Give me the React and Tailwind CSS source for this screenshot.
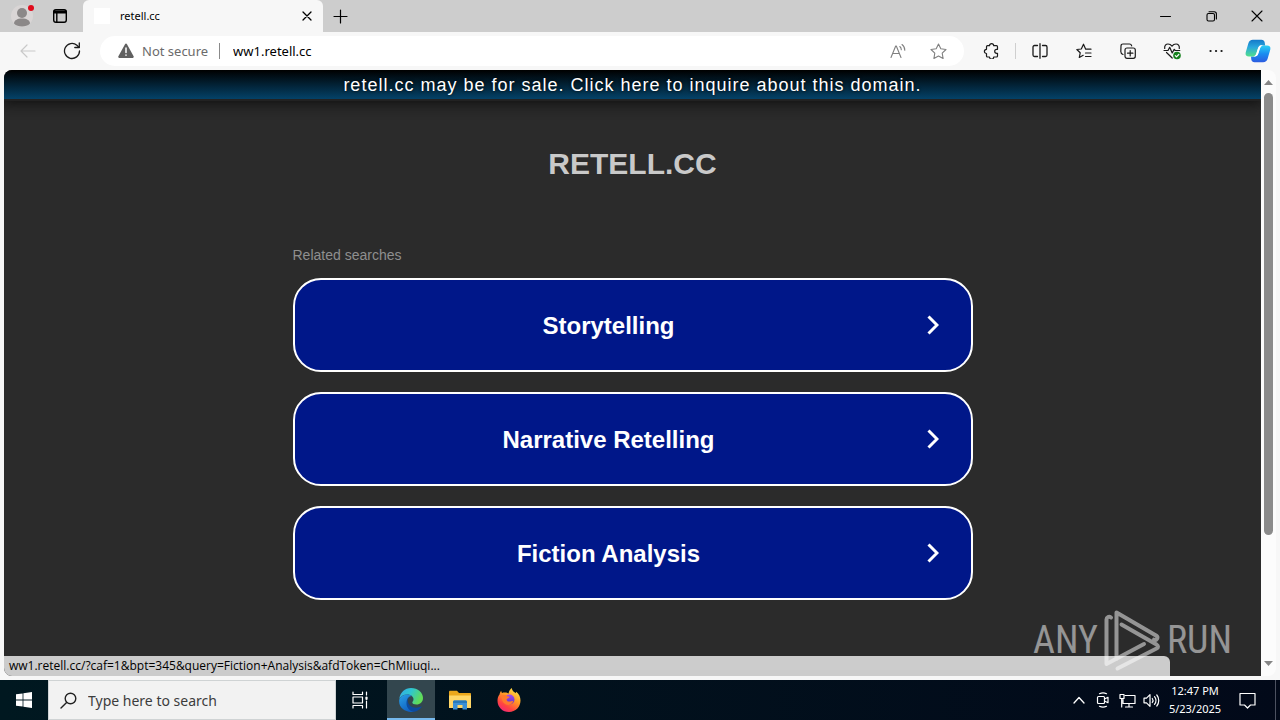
import React from "react";

const SANS = "font-['Noto_Sans','Open_Sans',sans-serif]";
const ARIAL = "font-['Liberation_Sans',Arial,sans-serif]";

function Icon({ size = 16, children, className = "", sw = 1 }) {
  return (
    <svg
      width={size}
      height={size}
      viewBox={`0 0 ${size} ${size}`}
      fill="none"
      stroke="currentColor"
      strokeWidth={sw}
      strokeLinecap="round"
      strokeLinejoin="round"
      aria-hidden="true"
      className={`shrink-0 ${className}`}
    >
      {children}
    </svg>
  );
}

function TabStrip() {
  return (
    <div className="flex h-8 shrink-0 items-stretch bg-[#cdcdcd] text-black">
      <button aria-label="Profile" className="flex w-11 items-center justify-center">
        <Icon size={24}>
          <circle cx="12" cy="12" r="11" fill="#d9d5d5" stroke="none" />
          <circle cx="12" cy="9" r="5" fill="#8b8888" stroke="none" />
          <path d="M4 19.5c0-3 3-5 8-5s8 2 8 5c-2 2.200-5 3-8 3s-6-.8-8-3z" fill="#8b8888" stroke="none" />
          <circle cx="21" cy="4" r="3" fill="#e00b1c" stroke="none" />
        </Icon>
      </button>
      <button aria-label="Tab actions" className="flex w-8 items-center justify-center">
        <Icon sw={1.4}>
          <rect x="1.700" y="1.700" width="12.600" height="12.600" rx="2.200" />
          <path d="M2 3.500h12M2 4.500h12" strokeWidth="2" />
          <path d="M4.800 5v9" />
        </Icon>
      </button>
      <div className="ml-[7px] flex w-60 items-center rounded-t-md bg-[#f7f7f7] pl-[11px] pr-2">
        <span className="size-4 bg-white" />
        <span className={`ml-[10px] flex-1 text-[11px] leading-4 ${SANS}`}>retell.cc</span>
        <button aria-label="Close tab" className="flex size-4 items-center justify-center">
          <Icon size={10} sw={1.3}>
            <path d="M1 1l8 8M9 1l-8 8" />
          </Icon>
        </button>
      </div>
      <button aria-label="New tab" className="flex w-[34px] items-center justify-center">
        <Icon size={15} sw={1.2}>
          <path d="M7.500 1v13M1 7.500h13" />
        </Icon>
      </button>
      <div className="ml-auto flex">
        <button aria-label="Minimize" className="flex w-[46px] items-center justify-center">
          <Icon size={11}>
            <path d="M.5 5.500h10" />
          </Icon>
        </button>
        <button aria-label="Restore" className="flex w-[46px] items-center justify-center">
          <Icon size={11} sw={1.1}>
            <rect x="1" y="2.500" width="7.500" height="7.500" rx="1.500" />
            <path d="M3 .7h5.200a2.200 2.200 0 0 1 2.200 2.200V8" />
          </Icon>
        </button>
        <button aria-label="Close" className="flex w-[46px] items-center justify-center">
          <Icon size={12} sw={1.1}>
            <path d="M1 1l10 10M11 1L1 11" />
          </Icon>
        </button>
      </div>
    </div>
  );
}

function ToolButton({ label, children, className = "w-11" }) {
  return (
    <button aria-label={label} className={`flex h-8 shrink-0 items-center justify-center ${className}`}>
      {children}
    </button>
  );
}

function Copilot() {
  return (
    <svg width="26" height="24" viewBox="0 0 26 24" aria-hidden="true">
      <defs>
        <linearGradient id="cpA" x1="0" y1="0" x2="0" y2="1">
          <stop offset="0" stopColor="#1479c9" />
          <stop offset=".45" stopColor="#29a7dd" />
          <stop offset="1" stopColor="#52e08a" />
        </linearGradient>
        <linearGradient id="cpB" x1="0" y1="0" x2="0" y2="1">
          <stop offset="0" stopColor="#2bd0f5" />
          <stop offset=".5" stopColor="#1a8cf0" />
          <stop offset="1" stopColor="#2c5be0" />
        </linearGradient>
      </defs>
      <path d="M18.500 6.500h3.500c2.500 0 4 1.500 3.300 4l-2.600 9c-.8 2.600-2.200 3.800-4.600 3.800H9.500c-1.800 0-2.800-1-3.200-2.800L6 17.500h3.500c2 0 3-1 3.600-3l1.600-5c.7-2 1.800-3 3.800-3z" fill="url(#cpB)" />
      <path d="M7.500 17.500H4c-2.500 0-4-1.500-3.300-4l2.600-9C4.100 1.900 5.500.7 7.900.7h8.600c1.800 0 2.800 1 3.200 2.800l.5 3h-3.700c-2 0-3 1-3.600 3l-1.600 5c-.7 2-1.800 3-3.800 3z" fill="url(#cpA)" />
      <path d="M14 7.500c.7-1 1.300-1.200 2.400-1.200h2.300c-2 .2-3 1.200-3.700 3.200l-1.600 5c-.6 2-1.700 3-3.700 3H8.500c1.600-.4 2.300-1.300 2.900-3l1.600-5z" fill="#fff" />
    </svg>
  );
}

function Toolbar() {
  return (
    <div className="flex h-[38px] shrink-0 items-center bg-[#f7f7f7] pl-[6px] pr-[2px] text-[#1b1b1b]">
      <ToolButton label="Back">
        <Icon className="text-[#c9c9c9]" sw={1.2}>
          <path d="M15 8H1M7 2L1 8l6 6" />
        </Icon>
      </ToolButton>
      <ToolButton label="Refresh">
        <Icon size={18} sw={1.3}>
          <path d="M16.500 9a7.500 7.500 0 1 1-2.600-5.700l2 1.900" />
          <path d="M16.300 1v4.500h-4.500" />
        </Icon>
      </ToolButton>
      <div className="ml-[6px] flex h-[30px] min-w-0 flex-1 items-center rounded-full bg-white pl-[18px] pr-[6px]">
        <button className={`flex shrink-0 items-center gap-2 text-[13px] leading-4 text-[#6b6b6b] ${SANS}`}>
          <Icon>
            <path d="M7 1.200c.5-.8 1.500-.8 2 0l6.600 12c.5.900-.1 1.900-1.100 1.900h-13c-1 0-1.600-1-1.100-1.900z" fill="#606060" stroke="none" />
            <path d="M8 5v4.500M8 12v.2" stroke="#fff" strokeWidth="1.500" />
          </Icon>
          Not secure
        </button>
        <span className="ml-[11px] h-4 w-px shrink-0 bg-[#8a8a8a]" />
        <input
          aria-label="Address"
          defaultValue="ww1.retell.cc"
          className={`ml-[13px] min-w-0 flex-1 bg-transparent text-[13px] leading-4 text-black outline-none ${SANS}`}
        />
        <ToolButton label="Read aloud" className="w-10">
          <Icon size={17} className="text-[#808080]" sw={1.100}>
            <path d="M1 14.500L5.700 3h.6L11 14.500M2.700 10.500h6.600" />
            <path d="M9.800 3.500c1 .8 1.500 1.900 1.500 3.200M12 1.500c1.800 1.300 2.800 3.200 2.800 5.700" />
          </Icon>
        </ToolButton>
        <ToolButton label="Add to favorites" className="w-10">
          <Icon size={17} className="text-[#808080]" sw={1.100}>
            <path d="M8.500 1l2.300 4.800 5.200.7-3.800 3.700.9 5.300-4.600-2.500-4.600 2.500.9-5.300L1 6.500l5.200-.7z" />
          </Icon>
        </ToolButton>
      </div>
      <ToolButton label="Extensions" className="ml-[5px] w-11">
        <Icon sw={1.200}>
          <path d="M4.500 2.700h2a2.100 2.100 0 0 1 4.200 0h2.800c.6 0 1 .4 1 1v2.600h-.8a2 2 0 0 0 0 4h.8V13c0 .6-.4 1-1 1h-2.800a2.100 2.100 0 0 1-4.200 0h-2c-.6 0-1-.4-1-1v-2.500a2.100 2.100 0 0 1 0-4.200V3.700c0-.6.4-1 1-1z" />
        </Icon>
      </ToolButton>
      <span className="mx-[2px] h-4 w-px shrink-0 bg-[#cfcfcf]" />
      <ToolButton label="Split screen">
        <Icon sw={1.300}>
          <path d="M5.500 2.500h-3c-.8 0-1.500.7-1.500 1.500v8c0 .8.700 1.500 1.500 1.500h3M10.500 2.500h3c.8 0 1.500.7 1.500 1.500v8c0 .8-.7 1.500-1.500 1.500h-3M8 .7v14.600" />
        </Icon>
      </ToolButton>
      <ToolButton label="Favorites">
        <Icon sw={1.200}>
          <path d="M15 6.200H9.700L7.500 1.200 5.300 6 .8 6.500l3.400 3.300-.9 4.700 3.900-2.200M9.500 10H15M9.500 13.500H15" />
        </Icon>
      </ToolButton>
      <ToolButton label="Collections">
        <Icon sw={1.200}>
          <rect x="5" y="5" width="10.300" height="10.300" rx="2" />
          <path d="M10.200 7.500v5.400M7.500 10.200h5.400M3 11.500C1.500 11 .8 10 .8 8.600L1 3C1 1.700 1.800 1 3 1h6.500c1.100 0 1.900.7 2.200 1.800" />
        </Icon>
      </ToolButton>
      <ToolButton label="Browser essentials">
        <Icon size={18} sw={1.200}>
          <path d="M1.700 6.500C1.300 3.800 3 2 5 2c1.700 0 3 .8 4 2.200C10 2.800 11.300 2 13 2c2 0 3.700 1.800 3.300 4.500M3.500 10.500l5.700 5.500" />
          <path d="M1 8.500h4l1.700-3.200L9.200 11l2-3.700 1 1.200h4.600" />
          <circle cx="14" cy="13.500" r="3.800" fill="#16811d" stroke="none" />
          <path d="M12.300 13.600l1.200 1.200 2.300-2.300" stroke="#fff" />
        </Icon>
      </ToolButton>
      <ToolButton label="Settings and more">
        <Icon>
          <path d="M2.500 8h.1M8 8h.1M13.500 8h.1" strokeWidth="2.200" />
        </Icon>
      </ToolButton>
      <ToolButton label="Copilot" className="w-10">
        <Copilot />
      </ToolButton>
    </div>
  );
}

function SearchCard({ children }) {
  return (
    <a
      href="#"
      className="flex h-[94px] items-center gap-1 rounded-[28px] border-2 border-white bg-[#001789] pr-8 text-2xl font-bold text-white"
    >
      <span className="flex-1 pt-[2px] text-center">{children}</span>
      <svg width="12" height="20" viewBox="0 0 12 20" fill="none" stroke="#fff" strokeWidth="3" aria-hidden="true">
        <path d="M1.500 1.500L10 10l-8.500 8.500" />
      </svg>
    </a>
  );
}

function Watermark() {
  return (
    <div className="absolute bottom-1 right-[29px] flex items-center gap-[6px] text-[38px] leading-none text-white/50 font-['Roboto_Condensed','Liberation_Sans_Narrow',sans-serif]">
      <span>ANY</span>
      <svg width="57" height="64" viewBox="0 0 57 64" fill="none" stroke="currentColor" strokeWidth="4" strokeLinecap="round" strokeLinejoin="round" aria-hidden="true">
        <path d="M7 9.500c-2-1.500-4.500-.5-4.500 2V56L40 36M12.500 51V4.500L52 27.500c3 2 .5 5.500-2 4.200M17.500 16.500L52.500 36.500c2 1.500 2 3 0 4L13.500 60.500" />
      </svg>
      <span>RUN</span>
    </div>
  );
}

function Page() {
  return (
    <main className={`relative min-w-0 flex-1 overflow-hidden rounded-l-lg bg-[#2b2b2b] ${ARIAL}`}>
      <a
        href="#"
        className="block border-b-2 border-[#222] bg-linear-to-b/srgb from-black to-[#044268] pt-px text-center text-lg leading-7 tracking-[1px] text-white shadow-[0_0_14px_3px_#111] [text-shadow:0_0_3px_#000]"
      >
        retell.cc may be for sale. Click here to inquire about this domain.
      </a>
      <div className="mx-auto w-full max-w-[680px]">
        <h1 className="mt-[45px] text-center text-3xl font-bold text-[#c9c9c9]">RETELL.CC</h1>
        <h2 className="mt-[63px] text-sm leading-5 text-[#8f8f8f]">Related searches</h2>
        <nav className="mt-[13px] flex flex-col gap-5">
          <SearchCard>Storytelling</SearchCard>
          <SearchCard>Narrative Retelling</SearchCard>
          <SearchCard>Fiction Analysis</SearchCard>
        </nav>
      </div>
      <div className="absolute bottom-0 left-0 right-[91px] h-5 rounded-tr-md bg-[#cccccc] pl-[5px] text-xs leading-5 text-black font-['Open_Sans','Noto_Sans',sans-serif]">
        ww1.retell.cc/?caf=1&amp;bpt=345&amp;query=Fiction+Analysis&amp;afdToken=ChMIiuqi...
      </div>
      <Watermark />
    </main>
  );
}

function Scrollbar() {
  return (
    <div className="flex w-[15px] shrink-0 flex-col items-center rounded-r-lg bg-[#fcfcfc] py-[10px]">
      <svg width="9" height="5" viewBox="0 0 9 5" fill="#858585" aria-hidden="true">
        <path d="M0 5L4.500 0 9 5z" />
      </svg>
      <div className="my-2 flex w-[9px] flex-1 flex-col">
        <div className="h-[79%] rounded-full bg-[#8b8b8b]" />
      </div>
      <svg width="9" height="5" viewBox="0 0 9 5" fill="#858585" aria-hidden="true">
        <path d="M0 0L4.500 5 9 0z" />
      </svg>
    </div>
  );
}

function EdgeLogo() {
  return (
    <svg width="24" height="24" viewBox="0 0 24 24" aria-hidden="true">
      <defs>
        <linearGradient id="egTop" x1="0" y1="0" x2="1" y2=".4">
          <stop offset="0" stopColor="#35a9e8" />
          <stop offset=".5" stopColor="#2fc6cf" />
          <stop offset="1" stopColor="#61dc57" />
        </linearGradient>
        <linearGradient id="egLeft" x1="0" y1="0" x2=".6" y2="1">
          <stop offset="0" stopColor="#2aa0e6" />
          <stop offset="1" stopColor="#0f5fc0" />
        </linearGradient>
      </defs>
      <path d="M.3 11C1 4.500 6 0 12 0c7 0 12 4.700 12 10 0 4-3 6.500-6.500 6.500-2.700 0-4.200-1-4.200-2 0-.8 1.200-1.300 1.200-3.200C14.500 8.700 12 6.500 8.500 6.500 4.500 6.500 1.500 8.500.3 11z" fill="url(#egTop)" />
      <path d="M.2 12C.8 9 4 6.500 8.500 6.500c1.900 0 3.400.6 4.500 1.600-3.400 0-5 3-5 6.100 0 4.500 3.200 8.300 7.500 9.200C8.500 25.400-.8 21 .2 12z" fill="url(#egLeft)" />
      <path d="M8.700 12.200c0 4.500 3.500 7.500 8.300 7.500 2 0 3.700-.5 5-1.200.5-.3.900.2.600.6C20.500 22 17.500 24 14.500 23.700 9.700 23 7.200 18.500 7.500 14.500 7.600 12 8.500 10 10.500 8.700 9.300 9.500 8.700 10.800 8.700 12.200z" fill="#0c4a9e" />
    </svg>
  );
}

function FolderLogo() {
  return (
    <svg width="22" height="20" viewBox="0 0 22 20" aria-hidden="true">
      <path d="M0 2c0-.8.500-1.200 1.200-1.200H8L10 3h11c.6 0 1 .4 1 1v14H0z" fill="#eba71c" />
      <path d="M0 5.500h22V18H0z" fill="#ffd667" />
      <path d="M4 19.500V12c0-.8.700-1.500 1.500-1.500h11c.8 0 1.500.7 1.500 1.500v7.500h-4.500V15h-5v4.500z" fill="#3b90d6" />
      <path d="M4 12c0-.8.700-1.500 1.500-1.500h11c.8 0 1.500.7 1.500 1.500v1H4z" fill="#2879b9" />
    </svg>
  );
}

function FirefoxLogo() {
  return (
    <svg width="24" height="24" viewBox="0 0 24 24" aria-hidden="true">
      <defs>
        <linearGradient id="ffA" x1=".8" y1="0" x2=".2" y2="1">
          <stop offset="0" stopColor="#ffe64a" />
          <stop offset=".4" stopColor="#ff9b25" />
          <stop offset=".75" stopColor="#ff4242" />
          <stop offset="1" stopColor="#f0247e" />
        </linearGradient>
        <linearGradient id="ffB" x1="0" y1="0" x2="0" y2="1">
          <stop offset="0" stopColor="#a44bf0" />
          <stop offset="1" stopColor="#5b35c4" />
        </linearGradient>
      </defs>
      <path d="M2.500 6.500c.2-1.500 1-3 1.700-3.800 0 1 .3 1.700.9 2.300C6 4.500 7 4.400 8 4.500c1.500 0 2.700.5 3.500 1 .4-2.500 1.700-4.500 3.300-5.500.2 1.800 1 3 2.300 4 .5.400 1 .8 1.500 1.300l.6-1.600c2.800 2 4.300 5.200 4.300 8.800C23.500 19 18.500 24 12 24S.5 19 .5 12.700c0-2.300.7-4.500 2-6.200z" fill="url(#ffA)" />
      <circle cx="12.500" cy="11.500" r="5" fill="url(#ffB)" />
      <path d="M4.500 7.500c2.500-1 4.500-.5 5.500.8 1.300 0 2.500.2 2.500 1-.4 1-2.300 1.100-2.900 2 0 1.700 1.400 2.600 3.400 2.200 1.500-.3 2.300-.8 3.300-.3-1 2.800-3.500 4-6 3.600C6.800 16.200 4.500 13 4.500 7.500z" fill="#ff7a2c" />
    </svg>
  );
}

function TaskButton({ label, active, children }) {
  return (
    <button
      aria-label={label}
      className={`flex w-12 items-center justify-center ${active ? "border-b-2 border-[#76b9ed] bg-[#33464e] pt-[2px]" : ""}`}
    >
      {children}
    </button>
  );
}

function Taskbar() {
  return (
    <footer className={`flex h-10 shrink-0 items-stretch bg-linear-to-r from-[#001820] to-[#020919] text-white ${SANS}`}>
      <TaskButton label="Start">
        <svg width="16" height="16" viewBox="0 0 16 16" fill="#fff" aria-hidden="true">
          <path d="M0 2.300l6.600-.9v6.200H0zM7.400 1.300L16 0v7.600H7.400zM0 8.400h6.600v6.200L0 13.700zM7.400 8.400H16V16l-8.600-1.200z" />
        </svg>
      </TaskButton>
      <label className="flex w-72 items-center border border-[#cfd3d4] bg-[#f2f2f2] pl-[11px] text-[#222]">
        <Icon size={17} sw={1.400}>
          <circle cx="10.500" cy="6.500" r="5.300" />
          <path d="M6.600 10.400L1 16" />
        </Icon>
        <input
          aria-label="Type here to search"
          placeholder="Type here to search"
          className="ml-[11px] min-w-0 flex-1 bg-transparent pt-[2px] text-sm outline-none placeholder:text-[#3c3c3c]"
        />
      </label>
      <TaskButton label="Task view">
        <Icon size={18} sw={1.200}>
          <path d="M2 1v2.500h9.500V1M2 17v-2.500h9.500V17M15.500 1v3M15.500 10v7" />
          <rect x="2" y="6" width="9.500" height="6" />
          <path d="M15.500 6.500v1.500" strokeWidth="2.200" />
        </Icon>
      </TaskButton>
      <div className="ml-[3px] flex gap-px">
        <TaskButton label="Microsoft Edge" active>
          <EdgeLogo />
        </TaskButton>
        <TaskButton label="File Explorer">
          <FolderLogo />
        </TaskButton>
        <TaskButton label="Firefox">
          <FirefoxLogo />
        </TaskButton>
      </div>
      <div className="ml-auto flex">
        <button aria-label="Show hidden icons" className="flex w-6 items-center justify-center">
          <Icon size={12} sw={1.300}>
            <path d="M1 9l5-5.500L11 9" />
          </Icon>
        </button>
        <button aria-label="Camera" className="flex w-6 items-center justify-center">
          <Icon sw={1.200}>
            <rect x="2.500" y="4.500" width="7" height="7" rx="1" />
            <path d="M9.500 7l3.500-1.700v5.400L9.500 9M4.500 1.700c2-1 5-1 7 0M4.500 14.300c2 1 5 1 7 0" />
          </Icon>
        </button>
        <button aria-label="Network" className="flex w-6 items-center justify-center">
          <Icon size={17} sw={1.200}>
            <path d="M6 3.500h10v8H4V7.500M10 11.500V15M6.500 15h7M2.700 6.500V15" />
            <rect x="1" y="2.500" width="4" height="4" />
          </Icon>
        </button>
        <button aria-label="Volume" className="flex w-6 items-center justify-center">
          <Icon size={17} sw={1.200}>
            <path d="M1 6.200h2.500L7 2.700v11.600l-3.500-3.500H1zM9.300 6.500c.9 1.200.9 2.800 0 4M11.500 4.700c1.800 2.200 1.800 5.400 0 7.600M13.800 3c2.600 3.200 2.600 7.800 0 11" />
          </Icon>
        </button>
        <button className="flex w-16 flex-col items-center justify-center text-[11px] leading-[18px]">
          <span>12:47 PM</span>
          <span>5/23/2025</span>
        </button>
        <button aria-label="Notifications" className="flex w-10 items-center justify-center">
          <Icon size={17} sw={1.200}>
            <path d="M1 1.500h15v11.500h-4.500L8.500 16l-3-3H1z" />
          </Icon>
        </button>
        <button aria-label="Show desktop" className="ml-2 w-[5px] border-l border-[#4c5160]" />
      </div>
    </footer>
  );
}

export default function App() {
  return (
    <div className="flex h-screen flex-col overflow-hidden">
      <TabStrip />
      <Toolbar />
      <div className="flex min-h-0 flex-1 bg-[#f7f7f7] px-1 pb-1">
        <Page />
        <Scrollbar />
      </div>
      <Taskbar />
    </div>
  );
}
